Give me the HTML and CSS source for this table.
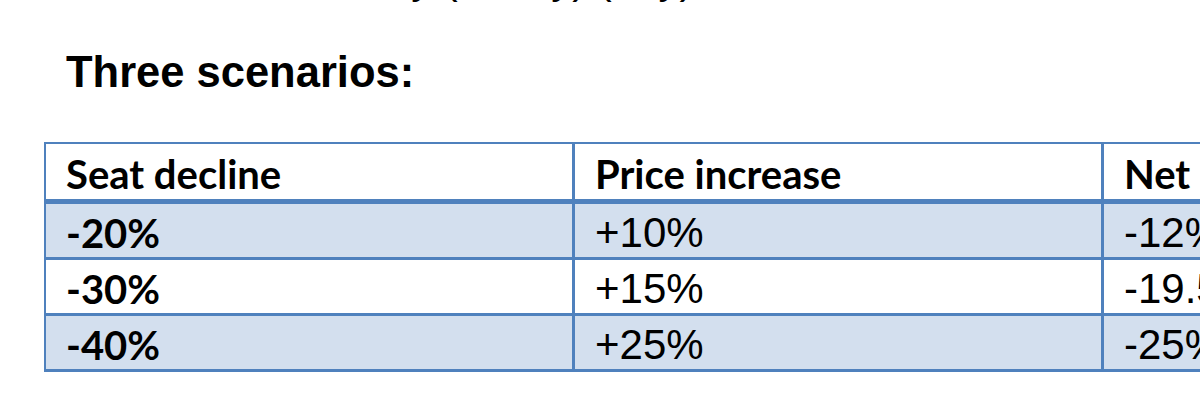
FILE: index.html
```html
<!DOCTYPE html>
<html lang="en">
<head>
<meta charset="utf-8">
<title>Three scenarios</title>
<link rel="stylesheet" href="styles.css">
</head>
<body>
<div class="page">
  <p class="cut-line">Revenue by (hourly) (day)</p>
  <h2 class="title">Three scenarios:</h2>
  <table class="scenarios">
    <thead>
      <tr>
        <th>Seat decline</th>
        <th>Price increase</th>
        <th>Net revenue</th>
      </tr>
    </thead>
    <tbody>
      <tr class="band">
        <td class="lead">-20%</td>
        <td>+10%</td>
        <td>-12%</td>
      </tr>
      <tr>
        <td class="lead">-30%</td>
        <td>+15%</td>
        <td>-19.5%</td>
      </tr>
      <tr class="band">
        <td class="lead">-40%</td>
        <td>+25%</td>
        <td>-25%</td>
      </tr>
    </tbody>
  </table>
</div>
</body>
</html>
```

FILE: styles.css
```css
html, body {
  margin: 0;
  padding: 0;
  background: #ffffff;
  overflow: hidden;
}

.page {
  width: 1200px;
  height: 415px;
  overflow: hidden;
}

.cut-line {
  margin: -45px 0 0 0;
  padding-left: 208px;
  font-family: "Liberation Sans", Arial, sans-serif;
  font-size: 42px;
  line-height: 48px;
  color: #000;
  white-space: nowrap;
}

.title {
  margin: 45px 0 0 0;
  padding-left: 66px;
  font-family: "Liberation Sans", Arial, sans-serif;
  font-weight: bold;
  font-size: 43.5px;
  line-height: 49px;
  color: #000;
}

.scenarios {
  margin: 45px 0 0 44px;
  border-collapse: separate;
  border-spacing: 0;
  table-layout: fixed;
  width: 1589px;
  border-top: 2px solid #4f81bd;
  border-left: 2px solid #4f81bd;
}

.scenarios th,
.scenarios td {
  box-sizing: border-box;
  width: 529px;
  padding: 4px 0 0 20px;
  text-align: left;
  vertical-align: middle;
  border-right: 3px solid #4f81bd;
  border-bottom: 3px solid #4f81bd;
  color: #000;
  white-space: nowrap;
}

.scenarios th {
  height: 60px;
  border-bottom-width: 5px;
  font-family: Lato, "Open Sans", sans-serif;
  font-weight: bold;
  font-size: 40px;
}

.scenarios td {
  height: 56px;
  font-family: "Liberation Sans", Arial, sans-serif;
  font-weight: normal;
  font-size: 42px;
  line-height: 48px;
}

.scenarios td.lead {
  font-family: Lato, "Open Sans", sans-serif;
  font-weight: bold;
  font-size: 40px;
}

.scenarios tr.band td {
  background: #d3dfee;
}
```
